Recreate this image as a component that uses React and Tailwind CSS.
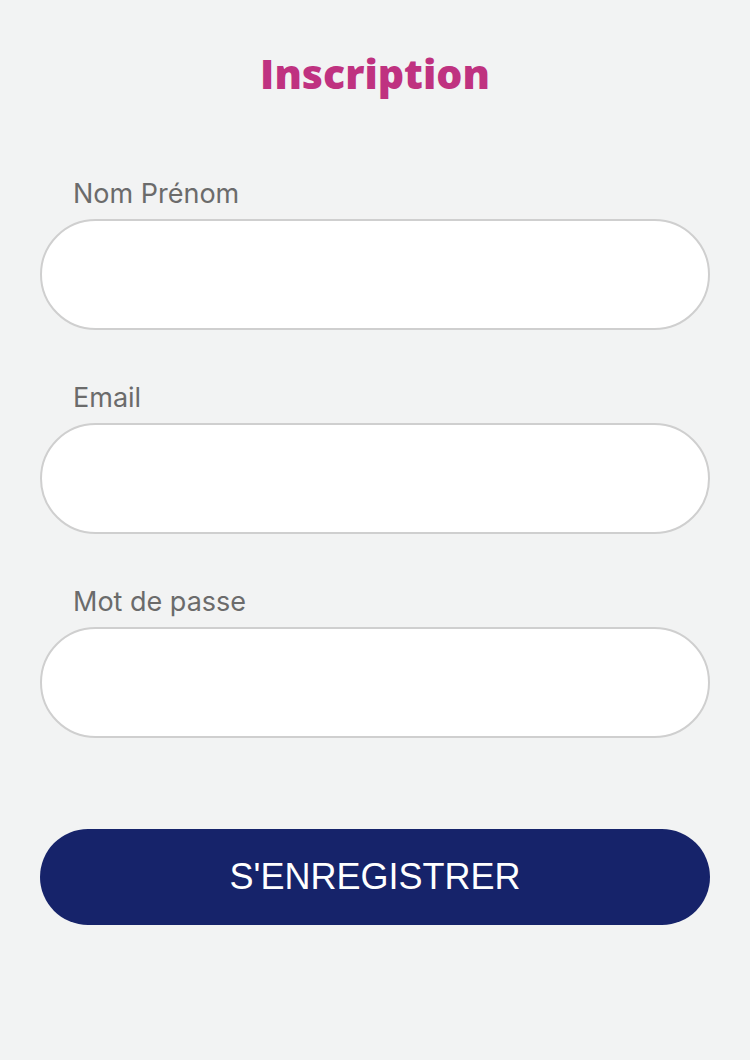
export default function App() {
  const fields = [
    { label: "Nom Prénom", type: "text" },
    { label: "Email", type: "email" },
    { label: "Mot de passe", type: "password" },
  ];

  return (
    <div className="min-h-[1060px] w-[750px] bg-[#f2f3f3] px-10 pt-[47px]">
      <h1 className="text-center text-[41px] font-extrabold leading-[52px] text-[#bf3280] [font-family:'Open_Sans',sans-serif]">
        Inscription
      </h1>

      <form className="mt-[77px] flex flex-col gap-[50px]">
        {fields.map((f) => (
          <label key={f.label} className="flex flex-col">
            <span className="pl-[33px] text-[27px] leading-[36px] text-[#6b6b6b] [font-family:Inter,sans-serif]">
              {f.label}
            </span>
            <input
              type={f.type}
              className="mt-[7px] h-[111px] rounded-full border-2 border-[#cfcfcf] bg-white px-8 text-[26px] outline-none"
            />
          </label>
        ))}

        <button
          type="button"
          className="mt-[41px] h-[96px] rounded-full bg-[#16236a] text-[36px] text-white [font-family:'Liberation_Sans',Arial,sans-serif]"
        >
          S'ENREGISTRER
        </button>
      </form>
    </div>
  );
}
